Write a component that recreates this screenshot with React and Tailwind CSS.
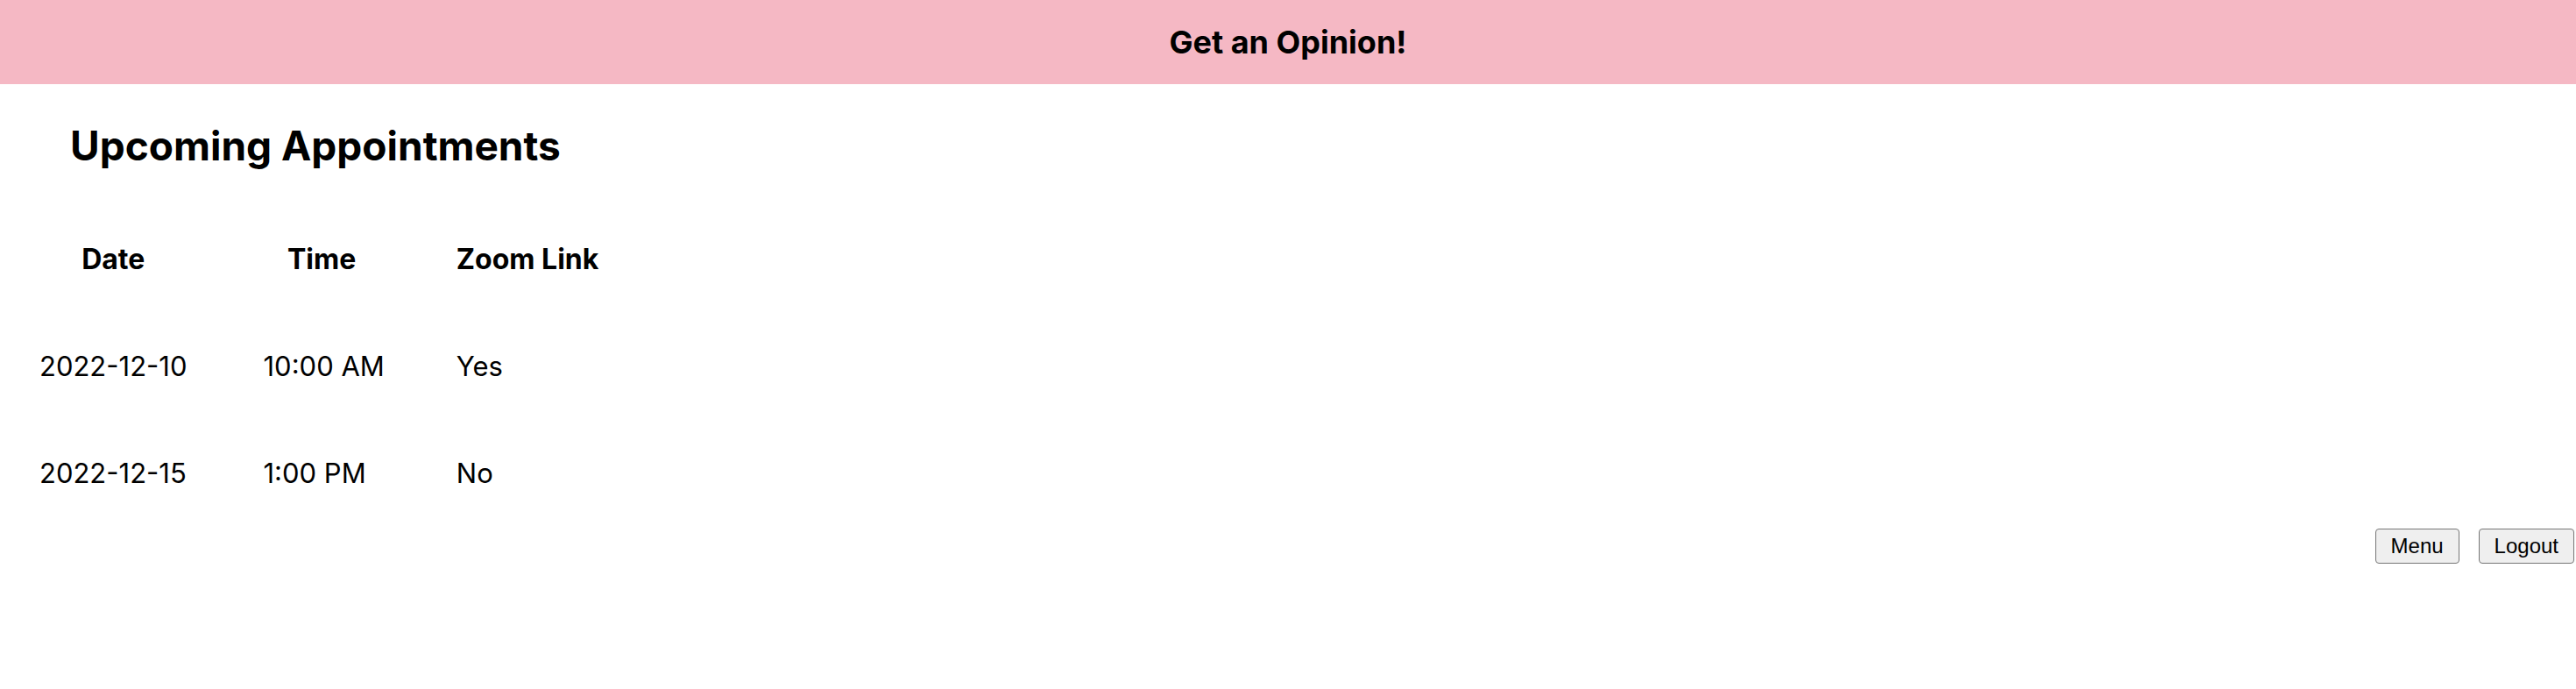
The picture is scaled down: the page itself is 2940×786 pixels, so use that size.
const appointments = [
  { date: '2022-12-10', time: '10:00 AM', zoom: 'Yes' },
  { date: '2022-12-15', time: '1:00 PM', zoom: 'No' },
];

export default function App() {
  return (
    <div className="min-h-[786px] bg-white text-black font-['Inter',sans-serif]">
      {/* Header */}
      <header className="h-[96px] bg-[#f5b8c4] flex items-center justify-center">
        <h2 className="text-[36px] font-bold leading-none">Get an Opinion!</h2>
      </header>

      <main>
        <h1 className="ml-[80px] mt-[42px] text-[46px] font-bold leading-[56px]">Upcoming Appointments</h1>

        <table className="mt-[39px] border-separate border-spacing-[3px] text-[31px] leading-[39px]">
          <thead>
            <tr>
              <th className="px-[42px] py-[40px] text-[32px] font-bold text-center">Date</th>
              <th className="px-[42px] py-[40px] text-[32px] font-bold text-center">Time</th>
              <th className="px-[42px] py-[40px] text-[32px] font-bold text-center">Zoom Link</th>
            </tr>
          </thead>
          <tbody>
            {appointments.map((a) => (
              <tr key={a.date}>
                <td className="px-[42px] py-[40px] text-left">{a.date}</td>
                <td className="pl-[42px] pr-[37px] py-[40px] text-left">{a.time}</td>
                <td className="px-[42px] py-[40px] text-left">{a.zoom}</td>
              </tr>
            ))}
          </tbody>
        </table>

        <div className="flex justify-end gap-[22px] pr-[2px] mt-[1px] font-['Liberation_Sans',Arial,sans-serif]">
          <button className="h-[40px] px-[17px] text-[24px] leading-none bg-[#efefef] border-[1.5px] border-[#767676] rounded-[4px]">
            Menu
          </button>
          <button className="h-[40px] px-[17px] text-[24px] leading-none bg-[#efefef] border-[1.5px] border-[#767676] rounded-[4px]">
            Logout
          </button>
        </div>
      </main>
    </div>
  );
}
